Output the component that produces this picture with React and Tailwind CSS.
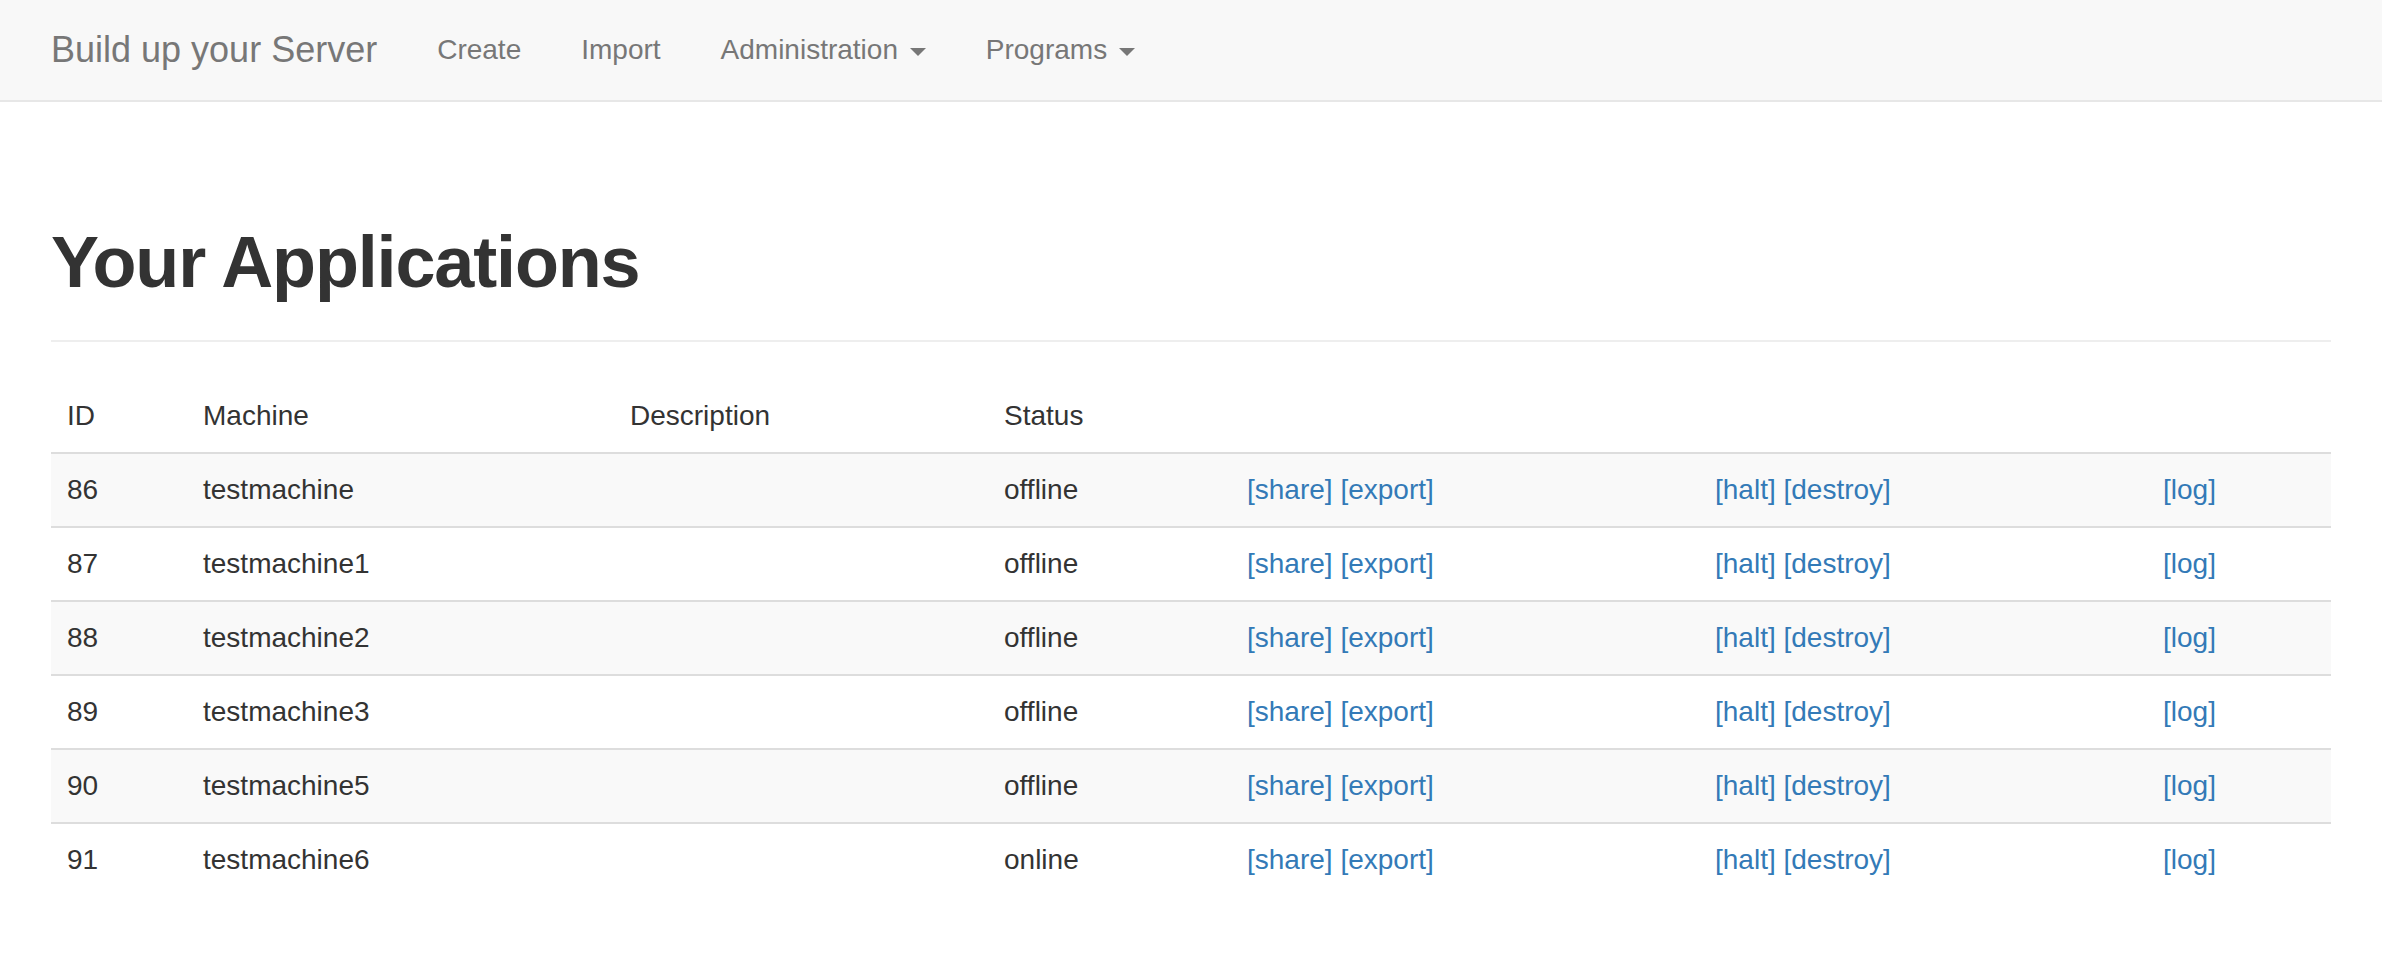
import React from "react";

const rows = [
  { id: 86, name: "testmachine", status: "offline" },
  { id: 87, name: "testmachine1", status: "offline" },
  { id: 88, name: "testmachine2", status: "offline" },
  { id: 89, name: "testmachine3", status: "offline" },
  { id: 90, name: "testmachine5", status: "offline" },
  { id: 91, name: "testmachine6", status: "online" },
];

function Caret() {
  return (
    <span className="ml-[4px] inline-block h-0 w-0 border-x-[8px] border-t-[8px] border-x-transparent border-t-[#777] align-middle" />
  );
}

function Link({ children }) {
  return (
    <a href="#" className="text-[#337ab7] no-underline">
      {children}
    </a>
  );
}

export default function App() {
  return (
    <div
      className="min-h-[956px] bg-white text-[#333]"
      style={{ fontFamily: '"Helvetica Neue", "Liberation Sans", Arial, sans-serif' }}
    >
      <nav className="h-[102px] border-b-2 border-[#e7e7e7] bg-[#f8f8f8]">
        <div className="mx-auto flex w-[2340px] px-[30px]">
          <a href="#" className="-ml-[30px] px-[30px] py-[30px] text-[36px] leading-[40px] text-[#777]">
            Build up your Server
          </a>
          <ul className="flex text-[28px] leading-[40px] text-[#777]">
            <li>
              <a href="#" className="block px-[30px] py-[30px]">Create</a>
            </li>
            <li>
              <a href="#" className="block px-[30px] py-[30px]">Import</a>
            </li>
            <li>
              <a href="#" className="block px-[30px] py-[30px]">
                Administration <Caret />
              </a>
            </li>
            <li>
              <a href="#" className="block px-[30px] py-[30px]">
                Programs <Caret />
              </a>
            </li>
          </ul>
        </div>
      </nav>

      <main className="mx-auto w-[2340px] px-[30px]">
        <div className="mt-[121px] border-b-2 border-[#eee] pb-[18px]">
          <h1 className="mb-[20px] text-[72px] font-bold leading-[79px] tracking-[-1.15px] text-[#333]">
            Your Applications
          </h1>
        </div>

        <table className="mt-[38px] w-full table-fixed border-separate border-spacing-0 text-[28px] leading-[40px]">
          <colgroup>
            <col className="w-[136px]" />
            <col className="w-[427px]" />
            <col className="w-[374px]" />
            <col className="w-[243px]" />
            <col className="w-[468px]" />
            <col className="w-[448px]" />
            <col className="w-[184px]" />
          </colgroup>
          <thead>
            <tr>
              <th className="p-[16px] text-left font-normal">ID</th>
              <th className="p-[16px] text-left font-normal">Machine</th>
              <th className="p-[16px] text-left font-normal">Description</th>
              <th className="p-[16px] text-left font-normal">Status</th>
              <th className="p-[16px]" />
              <th className="p-[16px]" />
              <th className="p-[16px]" />
            </tr>
          </thead>
          <tbody>
            {rows.map((r, i) => (
              <tr key={r.id} className={i % 2 === 0 ? "bg-[#f9f9f9]" : "bg-white"}>
                <td className="border-t-2 border-[#ddd] p-[16px]">{r.id}</td>
                <td className="border-t-2 border-[#ddd] p-[16px]">{r.name}</td>
                <td className="border-t-2 border-[#ddd] p-[16px]"></td>
                <td className="border-t-2 border-[#ddd] p-[16px]">{r.status}</td>
                <td className="border-t-2 border-[#ddd] p-[16px]">
                  <Link>[share]</Link> <Link>[export]</Link>
                </td>
                <td className="border-t-2 border-[#ddd] p-[16px]">
                  <Link>[halt]</Link> <Link>[destroy]</Link>
                </td>
                <td className="border-t-2 border-[#ddd] p-[16px]">
                  <Link>[log]</Link>
                </td>
              </tr>
            ))}
          </tbody>
        </table>
      </main>
    </div>
  );
}
